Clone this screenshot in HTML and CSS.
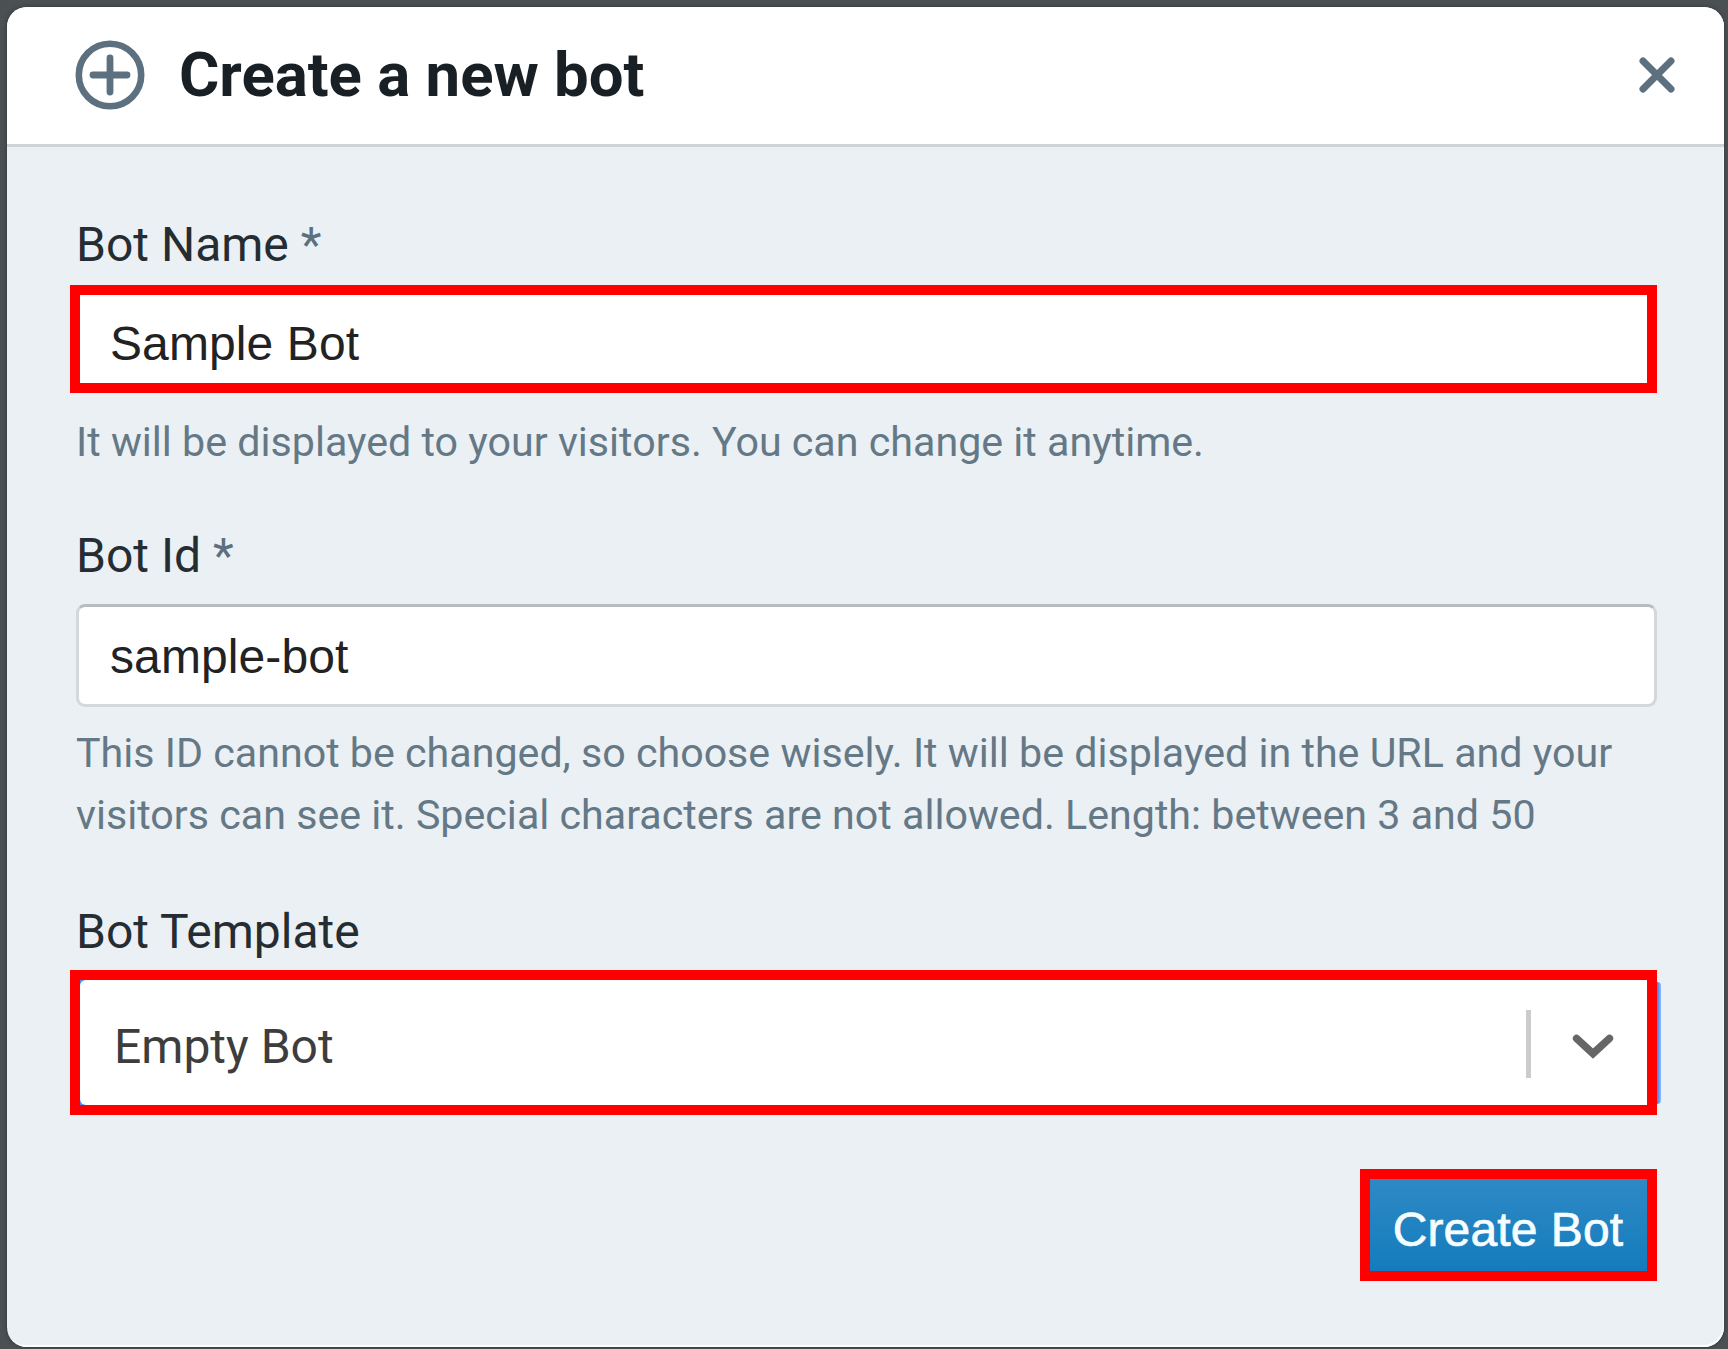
FILE: index.html
```html
<!DOCTYPE html>
<html lang="en">
<head>
<meta charset="utf-8">
<title>Create a new bot</title>
<link rel="stylesheet" href="styles.css">
</head>
<body>
<main class="dialog">
  <header class="header">
    <svg class="add-icon" viewBox="0 0 70 70" fill="none" stroke="#5c7080">
      <circle cx="35" cy="35" r="31.2" stroke-width="6.6"/>
      <path d="M35 18v34M18 35h34" stroke-width="6.8" stroke-linecap="round"/>
    </svg>
    <h1 class="title"><span>Create a new bot</span></h1>
    <svg class="close-icon" viewBox="0 0 36 36" fill="none" stroke="#5c7080" stroke-width="7" stroke-linecap="round">
      <path d="M4 4l28 28M32 4L4 32"/>
    </svg>
  </header>
  <form class="body">
    <div class="label name-label"><span>Bot Name</span> <span class="required">*</span></div>
    <div class="field name highlight"><span>Sample Bot</span></div>
    <p class="help name-help"><span>It will be displayed to your visitors. You can change it anytime.</span></p>
    <div class="label"><span>Bot Id</span> <span class="required">*</span></div>
    <div class="field bot-id"><span>sample-bot</span></div>
    <p class="help id-help"><span>This ID cannot be changed, so choose wisely. It will be displayed in the URL and your</span><br><span>visitors can see it. Special characters are not allowed. Length: between 3 and 50</span></p>
    <div class="label"><span>Bot Template</span></div>
    <div class="select highlight">
      <div class="select-inner">
        <span class="value">Empty Bot</span>
        <i class="divider"></i>
        <svg class="chevron" viewBox="0 0 42 26" fill="none" stroke="#666" stroke-width="7.5" stroke-linecap="round">
          <path d="M4.6 4.4L21 19.6L37.4 4.4"/>
        </svg>
      </div>
    </div>
    <div class="footer"><button type="button" class="submit highlight"><span>Create Bot</span></button></div>
  </form>
</main>
</body>
</html>
```
FILE: styles.css
```css
* { box-sizing: border-box; }

body {
  margin: 0;
  height: 1349px;
  padding: 7px 4px 2px 7px;
  overflow: hidden;
  background: #4b5053;
  font-family: Roboto, sans-serif;
}

.dialog {
  height: 1340px;
  border-radius: 20px;
  overflow: hidden;
  background: #ebf0f4;
  box-shadow: inset -1px -2px 0 #fbfcfd, 0 0 4px #303437;
}

.header {
  display: flex;
  align-items: center;
  height: 137px;
  padding: 0 49px 2px 68px;
  background: #fff;
}

.add-icon { width: 70px; height: 70px; }

.title {
  flex: 1;
  margin: 0 0 0 34px;
  color: #182026;
  font-size: 61.7px;
  font-weight: 700;
  line-height: 70px;
}

.close-icon { width: 36px; height: 36px; }

.body {
  padding: 70px 67px 0 69px;
  border-top: 3px solid #cfd3d7;
}

.label {
  height: 56px;
  color: #252c32;
  font-size: 48px;
  line-height: 56px;
  white-space: nowrap;
}

.name-label { margin-bottom: 12px; }

.required { color: #5c7080; }

.field {
  display: flex;
  align-items: center;
  color: #222;
  background: #fff;
  font: 48px "Liberation Sans", sans-serif;
  letter-spacing: .1px;
}

.highlight { border: 10px solid #f00; }

.name {
  height: 108px;
  margin-left: -6px;
  padding: 9px 0 0 30px;
}

.bot-id {
  height: 103px;
  margin-top: 20px;
  padding: 2px 0 0 31px;
  border: 3px solid #d3d8dc;
  border-top-color: #b7bcbf;
  border-radius: 9px;
}

.help {
  margin: 0;
  color: #647886;
  font-size: 41.2px;
  line-height: 62px;
  white-space: nowrap;
}

.name-help { margin: 18px 0 55px; }
.id-help { margin: 15px 0 58px; }

.select {
  height: 145px;
  margin: 10px 0 0 -6px;
  background: #4a90f5;
  position: relative;
}

.select::after {
  content: "";
  position: absolute;
  top: 2px;
  right: -14px;
  bottom: 1px;
  width: 4px;
  border-radius: 0 4px 4px 0;
  background: linear-gradient(90deg, #3f7df0, #8dbcff);
}

.select-inner {
  display: flex;
  align-items: center;
  height: 125px;
  padding: 0 33px 0 34px;
  border-radius: 6px 0 0 6px;
  background: #fff;
}

.value {
  flex: 1;
  padding-top: 7px;
  color: #3d3d3d;
  font-size: 48px;
}

.divider {
  width: 5px;
  height: 68px;
  margin: 3px 41px 0 0;
  background: #ccc;
}

.chevron { width: 42px; height: 26px; margin-top: 8px; }

.footer {
  display: flex;
  justify-content: flex-end;
  margin-top: 54px;
}

.submit {
  width: 297px;
  height: 112px;
  padding: 8px 1px 0 0;
  color: #f5fdff;
  background: linear-gradient(#2e89c5, #147cbd);
  font: 48px "Liberation Sans", sans-serif;
  letter-spacing: .1px;
  -webkit-text-stroke: .7px #f5fdff;
  white-space: nowrap;
}
```
